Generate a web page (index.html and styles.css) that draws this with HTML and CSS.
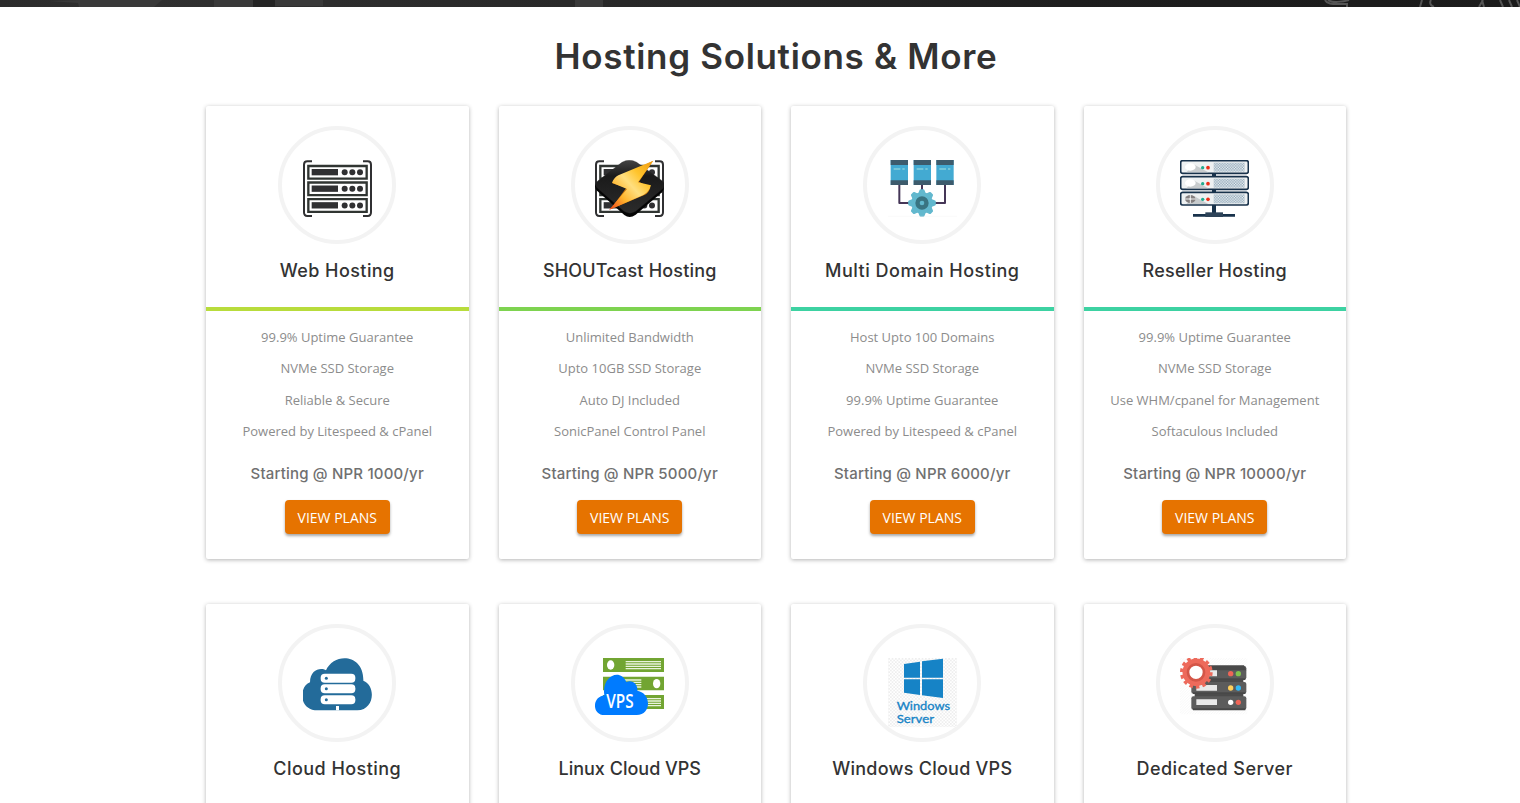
FILE: index.html
```html
<!DOCTYPE html>
<html lang="en">
<head>
<meta charset="utf-8">
<title>Hosting Solutions &amp; More</title>
<link rel="stylesheet" href="styles.css">
</head>
<body>
<div class="hero-edge">
  <svg width="1520" height="7" viewBox="0 0 1520 7">
    <defs><linearGradient id="hg"><stop offset="0" stop-color="#2b2b2b"/><stop offset=".1" stop-color="#303030"/><stop offset=".45" stop-color="#272727"/><stop offset=".7" stop-color="#1e1e1e"/><stop offset="1" stop-color="#1b1b1b"/></linearGradient></defs>
    <path fill="url(#hg)" d="M0 0h1520v7H0z"/>
    <path fill="#393939" d="M80 0h82l-8 7H79l-1-4-30-2zM214 0h39v7h-39zM275 0h48v6h-48zM575 0h28v7h-28z"/>
    <path fill="#252525" d="M253 0h22v7h-22z"/>
    <path fill="none" stroke="#555" stroke-width="2" d="M1325 0c2 4 7 4 13 4h9v3M1328 0c4 3 15 2 21 0M1422 0l-2 7M1431 0c-2 3 0 6 3 7M1483 0l-4 7M1482 0l2 7M1500 0l3 7M1509 0l3 7M1517 0l3 7"/>
  </svg>
</div>
<main class="solutions">
  <h1 class="heading">Hosting Solutions &amp; More</h1>
  <div class="grid">
    <article class="card">
      <header class="card-head lime">
        <div class="ring">
          <svg class="icon" viewBox="99 120 207 207">
            <g id="rack">
              <path fill="none" stroke="#303032" stroke-width="6" d="M126 124h-14q-10 0-10 10v143q0 11 10 11h14M279 124h14q10 0 10 10v143q0 11-10 11h-14"/>
              <g id="unit"><path fill="#fff" stroke="#303532" stroke-width="7" d="M115 138h175v38H115z"/><path fill="#303032" d="M125 147h79v19h-79z"/><g fill="#303032"><circle cx="224" cy="157" r="9"/><circle cx="247" cy="157" r="9"/><circle cx="270" cy="157" r="9"/></g></g>
              <use href="#unit" y="49.5"/><use href="#unit" y="99.5"/>
            </g>
          </svg>
        </div>
        <h2 class="name t-web">Web Hosting</h2>
      </header>
      <ul class="features"><li>99.9% Uptime Guarantee</li><li>NVMe SSD Storage</li><li>Reliable &amp; Secure</li><li>Powered by Litespeed &amp; cPanel</li></ul>
      <p class="price">Starting @ NPR 1000/yr</p>
      <a class="button">VIEW PLANS</a>
    </article>
    <article class="card">
      <header class="card-head green">
        <div class="ring">
          <svg class="icon" viewBox="99 120 207 207">
            <defs>
              <linearGradient id="tile" x2="0" y2="1"><stop stop-color="#444"/><stop offset=".3" stop-color="#1a1a1a"/><stop offset="1" stop-color="#2c2c2c"/></linearGradient>
              <linearGradient id="bolt" x1="1" y1="0" x2="0" y2="1"><stop stop-color="#f09a10"/><stop offset=".3" stop-color="#ffc42c"/><stop offset=".5" stop-color="#ffdf80"/><stop offset=".72" stop-color="#ffb52d"/><stop offset="1" stop-color="#ee3c18"/></linearGradient>
            </defs>
            <use href="#rack"/>
            <path fill="#050505" d="M100 194q-3 10 5 18l82 73q16 12 34-1l79-67q8-9 5-22z"/>
            <path fill="url(#tile)" stroke="#222" d="M180 127q22-13 44 0l76 55q14 12 1 25l-80 67q-17 11-35 0l-80-70q-11-11 1-21z"/>
            <path fill="#cc7609" d="M273 123l-105 50q-11 5-17 17l42 13-47 65 103-44q10-4 16-21l-34-18z"/>
            <path fill="url(#bolt)" d="M274 122l-105 44q-13 7-19 22l45 19-54 63 103-45q17-8 23-29l-39-9z"/>
          </svg>
        </div>
        <h2 class="name t-shout">SHOUTcast Hosting</h2>
      </header>
      <ul class="features"><li>Unlimited Bandwidth</li><li>Upto 10GB SSD Storage</li><li>Auto DJ Included</li><li>SonicPanel Control Panel</li></ul>
      <p class="price">Starting @ NPR 5000/yr</p>
      <a class="button">VIEW PLANS</a>
    </article>
    <article class="card">
      <header class="card-head teal">
        <div class="ring">
          <svg class="icon" viewBox="99 120 207 207">
            <path fill="none" stroke="#453657" stroke-width="6" stroke-linejoin="round" d="M133 190v59h137v-59M201 190v30"/>
            <g id="server"><path fill="#43aad2" d="M107 120h52v75h-52z"/><path fill="#3d5b6c" d="M107 120h52v15h-52zM107 181h52v14h-52z"/><path stroke="#84d0dc" stroke-width="5" d="M116 147h20M142 147h7"/></g>
            <use href="#server" x="69"/><use href="#server" x="137"/>
            <g fill="#62b8ce"><circle cx="201" cy="249" r="32"/>
              <g id="teeth"><path id="tooth" stroke="#62b8ce" stroke-width="7" stroke-linejoin="round" d="M197 211h8l6 15h-20zM197 287h8l6-15h-20z"/><use href="#tooth" transform="rotate(90 201 249)"/></g><use href="#teeth" transform="rotate(45 201 249)"/></g>
            <circle cx="201" cy="249" r="13.5" fill="#62b8ce" stroke="#397482" stroke-width="13"/>
            <path stroke="#f1f1f1" d="M99 289h207"/>
          </svg>
        </div>
        <h2 class="name t-multi">Multi Domain Hosting</h2>
      </header>
      <ul class="features"><li>Host Upto 100 Domains</li><li>NVMe SSD Storage</li><li>99.9% Uptime Guarantee</li><li>Powered by Litespeed &amp; cPanel</li></ul>
      <p class="price">Starting @ NPR 6000/yr</p>
      <a class="button">VIEW PLANS</a>
    </article>
    <article class="card">
      <header class="card-head teal">
        <div class="ring">
          <svg class="icon" viewBox="99 120 207 207">
            <defs><pattern id="mesh" width="8" height="8" patternUnits="userSpaceOnUse"><path fill="#8ca5b8" d="M0 0h4v4H0zM4 4h4v4H4z"/></pattern></defs>
            <path stroke="#18324b" stroke-width="12" d="M201 155v130"/><path stroke="#18324b" stroke-width="8" d="M138 286h126"/><path stroke="#2d4358" stroke-width="14" d="M175 284h53"/>
            <g id="blade"><rect x="101" y="122" width="203" height="38" rx="6" fill="#eef1f2" stroke="#18324b" stroke-width="5"/><path fill="#c7cbcd" d="M142 134l42 23h-66z"/><path fill="url(#mesh)" d="M200 128h93v27h-93z"/><ellipse cx="130" cy="141" rx="16" ry="11" fill="#fff"/><circle cx="167" cy="143" r="5" fill="#20aa8d"/><circle cx="183" cy="143" r="5.500" fill="#ec2e18"/></g>
            <use href="#blade" y="48"/><use href="#blade" y="95"/>
            <ellipse cx="130" cy="237" rx="16" ry="12" fill="#858080"/><path stroke="#eee" stroke-width="3" d="M114 237h32M130 225v24"/><circle cx="130" cy="237" r="3" fill="#eee"/>
          </svg>
        </div>
        <h2 class="name t-reseller">Reseller Hosting</h2>
      </header>
      <ul class="features"><li>99.9% Uptime Guarantee</li><li>NVMe SSD Storage</li><li>Use WHM/cpanel for Management</li><li>Softaculous Included</li></ul>
      <p class="price">Starting @ NPR 10000/yr</p>
      <a class="button">VIEW PLANS</a>
    </article>
    <article class="card">
      <header class="card-head lime">
        <div class="ring">
          <svg class="icon" viewBox="99 120 207 207">
            <path fill="#236b9a" d="M143 277c-58 0-57-72-23-84 0-38 32-46 48-36 24-55 114-50 112 31 38 14 35 89-18 89z"/>
            <g id="disk"><rect x="152" y="167" width="104" height="27" rx="12" fill="#fff"/><circle cx="169" cy="180.500" r="4.500" fill="#236b9a"/></g>
            <use href="#disk" y="32"/><use href="#disk" y="65"/><path fill="#fff" d="M198 264h9v13h-9z"/>
          </svg>
        </div>
        <h2 class="name t-cloud">Cloud Hosting</h2>
      </header>
    </article>
    <article class="card">
      <header class="card-head green">
        <div class="ring">
          <svg class="icon" viewBox="99 120 207 207">
            <path fill="#72a532" d="M123 120h183v42H123zM123 176h183v41H123zM123 231h183v42H123z"/>
            <ellipse cx="146" cy="141" rx="11" ry="14" fill="#fff"/><ellipse cx="284" cy="197" rx="11" ry="14" fill="#fff"/>
            <path stroke="#e9f3dc" stroke-width="4" d="M191 131h106M191 138h106M191 145h106M191 152h106M170 186h68M170 193h68M170 200h68M170 207h68M230 242h67M230 249h67M230 256h67M230 263h67"/>
            <path fill="#007bff" d="M127 291c-37 0-38-54 0-59-9-57 47-83 66-40 19-9 35 8 33 26 43 7 43 73-2 73z"/>
            <text class="vps" x="133" y="270" textLength="82" lengthAdjust="spacingAndGlyphs">VPS</text>
          </svg>
        </div>
        <h2 class="name t-linux">Linux Cloud VPS</h2>
      </header>
    </article>
    <article class="card">
      <header class="card-head teal">
        <div class="ring">
          <svg class="icon" viewBox="99 120 207 207">
            <defs><pattern id="check" width="10" height="10" patternUnits="userSpaceOnUse"><path fill="#fff" d="M0 0h10v10H0z"/><path fill="#eee" d="M0 0h5v5H0zM5 5h5v5H5z"/></pattern></defs>
            <path fill="url(#check)" d="M99 120h207v207H99z"/>
            <path fill="#1683c6" d="M147 138l48-7v48h-48zM201 130l63-8v57h-63zM147 184h48v47l-48-7zM201 184h63v56l-63-8z"/>
            <g class="winserver"><text x="125" y="276" textLength="160" lengthAdjust="spacingAndGlyphs">Windows</text><text x="125" y="315" textLength="112" lengthAdjust="spacingAndGlyphs">Server</text></g>
          </svg>
        </div>
        <h2 class="name t-windows">Windows Cloud VPS</h2>
      </header>
    </article>
    <article class="card">
      <header class="card-head teal">
        <div class="ring">
          <svg class="icon" viewBox="99 120 207 207">
            <defs><pattern id="hatch" width="8" height="8" patternUnits="userSpaceOnUse"><path stroke="#f1f1f1" stroke-width="1.500" d="M0 8l8-8"/></pattern></defs>
            <path fill="url(#hatch)" d="M99 120h202v169H99z"/>
            <path fill="#4b4b4b" d="M143 180h146v62H143z"/>
            <g fill="#5c5c5c"><rect x="133" y="144" width="165" height="41" rx="7"/><rect x="133" y="192" width="165" height="35" rx="6"/><rect x="133" y="235" width="165" height="40" rx="6"/></g>
            <path fill="#484848" d="M138 142h153l7 15H133zM138 181h157v5H138zM138 223h157v5H138zM138 271h157v6H138z"/>
            <path fill="#e9e9e9" d="M148 157h62v18h-62zM148 201h62v17h-62zM148 244h62v17h-62z"/>
            <circle cx="251" cy="167" r="8" fill="#ef6557"/><circle cx="274" cy="167" r="8" fill="#81c44c"/><circle cx="251" cy="210" r="8" fill="#ffd05c"/><circle cx="274" cy="210" r="8" fill="#34b9f5"/><circle cx="251" cy="253" r="8" fill="#fff"/><circle cx="274" cy="253" r="8" fill="#ef6557"/>
            <circle cx="148" cy="163" r="43" fill="none" stroke="#ed6a5b" stroke-width="12" stroke-dasharray="10.500 8.800"/>
            <circle cx="148" cy="163" r="30" fill="#fff" stroke="#ed6a5b" stroke-width="23"/><circle cx="147" cy="163" r="24" fill="#fff" stroke="#d45648" stroke-width="8"/>
          </svg>
        </div>
        <h2 class="name t-dedicated">Dedicated Server</h2>
      </header>
    </article>
  </div>
</main>
</body>
</html>
```
FILE: styles.css
```css
* { box-sizing: border-box; }
body { margin: 0; background: #fff; font-family: "Open Sans", sans-serif; color: #8c8c8c; height: 803px; overflow: hidden; }
.hero-edge { height: 7px; overflow: hidden; }
.hero-edge svg { display: block; }
.solutions { height: 796px; overflow: hidden; padding-left: 32px; }
.heading { margin: 0; height: 99px; text-align: center; font: 600 35px/99px Inter, sans-serif; letter-spacing: .68px; color: #333; }
.grid { width: 1140px; margin: 0 auto; display: grid; grid-template-columns: repeat(4, 1fr); column-gap: 30px; row-gap: 45px; }
.card { height: 453px; border-radius: 2px; background: #fff; text-align: center; box-shadow: 0 1px 4px rgba(0,0,0,.3); }
.card-head { height: 205px; padding-top: 20px; border-bottom: 4px solid; }
.lime { border-color: #b8dc3c; }
.green { border-color: #7ed350; }
.teal { border-color: #3dd2a2; }
.ring { width: 118px; height: 118px; margin: 0 auto; border: 4px solid #f3f3f3; border-radius: 50%; padding-top: 30px; }
.icon { display: block; width: 69px; height: 69px; margin: 0 auto; }
.name { margin: 13px 0 0; font: 500 18px/28px Inter, sans-serif; color: #333; }
.t-web { letter-spacing: .42px; }
.t-shout { letter-spacing: .18px; }
.t-multi { letter-spacing: .5px; }
.t-reseller { letter-spacing: .27px; }
.t-cloud { letter-spacing: .46px; }
.t-windows { letter-spacing: .25px; }
.t-dedicated { letter-spacing: .43px; }
.features { list-style: none; margin: 0; padding: 10.6px 0 0; font-size: 13px; line-height: 31.45px; }
.price { margin: 14.6px 0 0; font: 500 15px/24px Inter, sans-serif; letter-spacing: .18px; color: #707070; }
.button { display: block; width: 105px; height: 34px; margin: 14px auto 0; border-radius: 4px; background: #e67300; color: #fff; font-size: 14px; line-height: 36px; box-shadow: 0 2px 3px rgba(0,0,0,.35); }
.vps { font: 600 57px "Open Sans", sans-serif; fill: #fff; }
.winserver { font: 400 37px Lato, sans-serif; fill: #1683c6; stroke: #1683c6; stroke-width: 1px; }
```
